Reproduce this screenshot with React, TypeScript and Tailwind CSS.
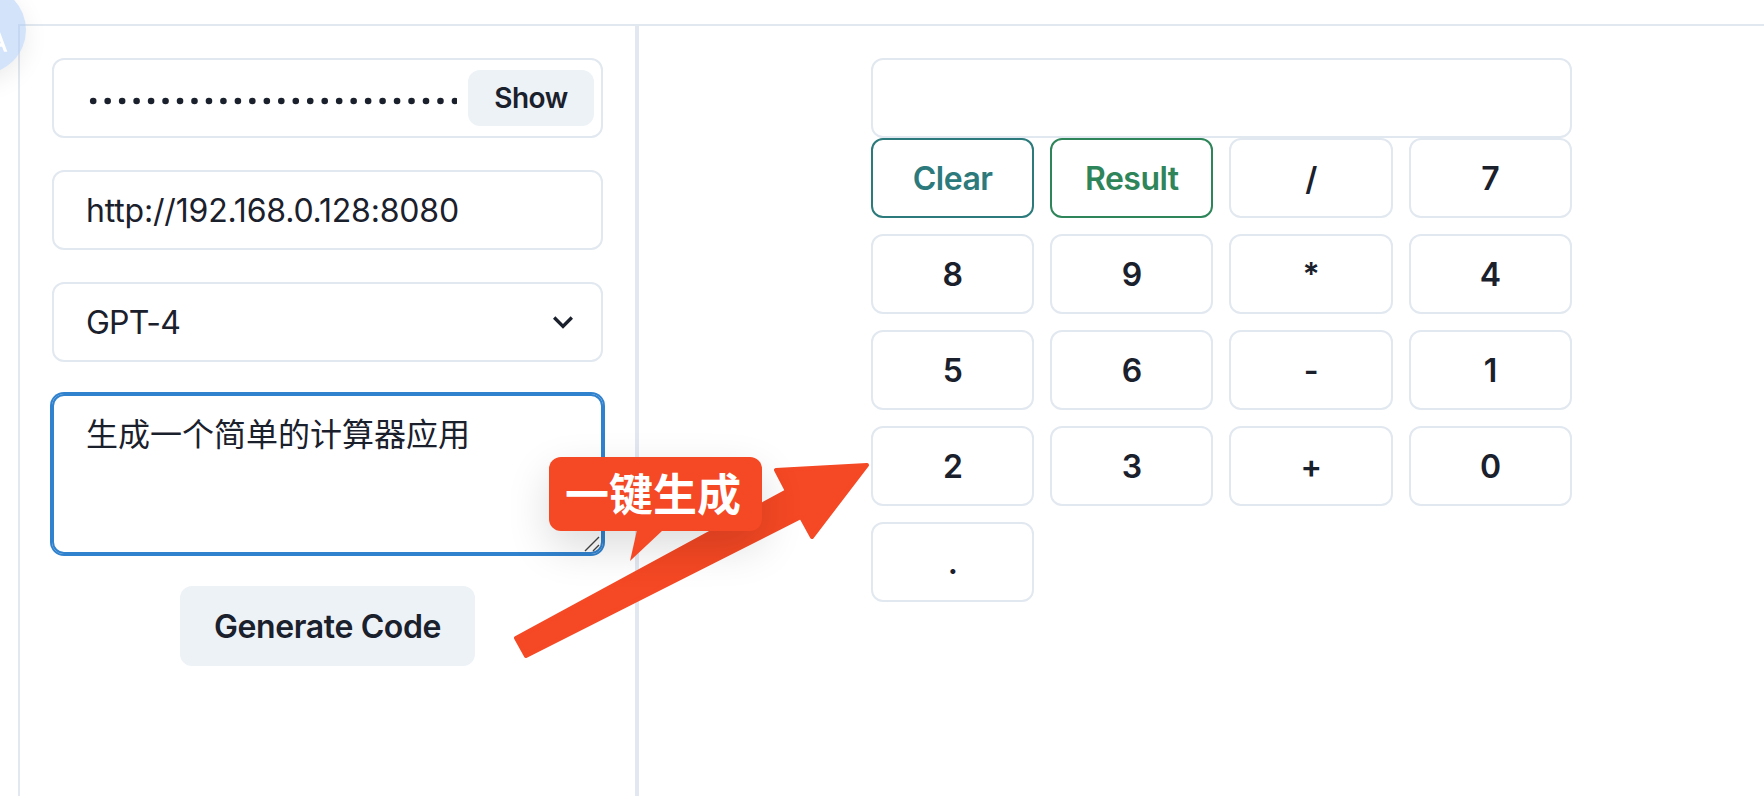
import React from "react";

const field = "flex h-20 w-full items-center rounded-xl border-2 border-[#e2e8f0]";

type Key = { label: string; tone?: "teal" | "green" };

const keys: Key[] = [
  { label: "Clear", tone: "teal" },
  { label: "Result", tone: "green" },
  ...["/", "7", "8", "9", "*", "4", "5", "6", "-", "1", "2", "3", "+", "0", "."].map((label) => ({ label })),
];

const tones = {
  teal: "border-[#2c7a7b] text-[#2c7a7b]",
  green: "border-[#2f855a] text-[#2f855a]",
  plain: "border-[#e2e8f0] text-[#1a202c]",
};

function KeyButton({ label, tone }: Key) {
  return (
    <button className={`flex h-20 items-center justify-center rounded-xl border-2 pt-0.5 text-[32px] font-semibold tracking-[-0.5px] ${tones[tone ?? "plain"]}`}>
      {label}
    </button>
  );
}

function Settings() {
  return (
    <aside className="flex w-[619px] shrink-0 flex-col items-center gap-8 border-r-4 border-[#e2e8f0] p-8">
      <div className={`${field} justify-between pr-[7px] pl-[35px]`}>
        <svg className="h-10 w-[368px]" viewBox="0 0 368 40" fill="#1a202c" role="img" aria-label="Hidden key">
          {Array.from({ length: 26 }, (_, i) => (
            <circle key={i} cx={4.2 + i * 14.47} cy="23" r="3.3" />
          ))}
        </svg>
        <button className="h-14 w-[126px] rounded-xl bg-[#edf2f7] text-[28px] font-semibold tracking-[-0.5px]">Show</button>
      </div>
      <div className={`${field} px-8 pt-0.5`}>
        <span className="text-[32px] tracking-[-0.18px]">http://192.168.0.128:8080</span>
      </div>
      <div className={`${field} justify-between pr-[18px] pl-8`}>
        <span className="pt-px text-[32px] tracking-[-0.8px]">GPT-4</span>
        <svg className="size-10" viewBox="0 0 24 24" fill="#1a202c">
          <path d="M16.59 8.59L12 13.17 7.41 8.59 6 10l6 6 6-6z" />
        </svg>
      </div>
      <div className="relative h-40 w-full rounded-xl border-2 border-[#3182ce] px-8 py-3.5 shadow-[0_0_0_2px_#3182ce]">
        <p className="font-['Noto_Sans_CJK_SC',sans-serif] text-[32px] leading-[44px]">生成一个简单的计算器应用</p>
        <svg className="absolute right-px bottom-0 size-4" viewBox="0 0 16 16" stroke="#444" strokeWidth="1.4">
          <path d="M1 15L15 1M9 15l6-6" />
        </svg>
      </div>
      <button className="h-20 w-[295px] rounded-xl bg-[#edf2f7] pt-0.5 text-[32px] font-semibold tracking-[-0.38px]">Generate Code</button>
    </aside>
  );
}

function Calculator() {
  return (
    <main className="grow pt-8 pl-[232px]">
      <div className="w-[700.8px]">
        <div className={field} />
        <div className="grid grid-cols-4 gap-4">
          {keys.map((k) => (
            <KeyButton key={k.label} {...k} />
          ))}
        </div>
      </div>
    </main>
  );
}

function Annotation() {
  return (
    <>
      <svg className="absolute top-[450px] left-[500px] h-[220px] w-[380px]" viewBox="500 450 380 220" fill="#f54824" stroke="#f54824" strokeWidth="4" strokeLinejoin="round">
        <path d="M516 638L787 491L776 470L867 465L812 537L801 517L526 656Z" />
      </svg>
      <div className="absolute top-[457px] left-[549px] flex h-[74px] w-[213px] items-center rounded-xl bg-[#f54824] pb-1 pl-4 shadow-[0_16px_44px_rgba(0,0,0,0.14)]">
        <span className="font-['Noto_Sans_CJK_SC',sans-serif] text-[44px] leading-none font-bold text-white">一键生成</span>
      </div>
      <svg className="absolute top-[530px] left-[629px] h-[32px] w-[36px]" viewBox="0 0 36 32" fill="#f54824">
        <path d="M8 0H34L1 31Z" />
      </svg>
    </>
  );
}

function TranslateBadge() {
  return (
    <div className="absolute top-[-14px] left-[-62px] size-22 rounded-full bg-[#a8c8f5]/50 shadow-[0_8px_24px_rgba(0,0,0,0.08)]">
      <svg className="absolute top-[29px] left-[31px] size-10" viewBox="0 0 24 24" fill="#fff">
        <path d="M12.87 15.07l-2.54-2.51.03-.03A17.52 17.52 0 0 0 14.07 6H17V4h-7V2H8v2H1v2h11.17C11.5 7.92 10.44 9.75 9 11.35 8.07 10.32 7.3 9.19 6.69 8h-2c.73 1.63 1.73 3.17 2.98 4.56l-5.09 5.02L4 19l5-5 3.11 3.11.76-2.04zM18.5 10h-2L12 22h2l1.12-3h4.75L21 22h2l-4.5-12zm-2.62 7l1.62-4.33L19.12 17h-3.24z" />
      </svg>
    </div>
  );
}

export default function App() {
  return (
    <div className="relative h-[796px] w-full overflow-hidden bg-white pt-6 pl-[18px] font-['Inter',sans-serif] text-[#1a202c]">
      <div className="flex h-[900px] border-t-2 border-l-2 border-[#e2e8f0]">
        <Settings />
        <Calculator />
      </div>
      <Annotation />
      <TranslateBadge />
    </div>
  );
}
